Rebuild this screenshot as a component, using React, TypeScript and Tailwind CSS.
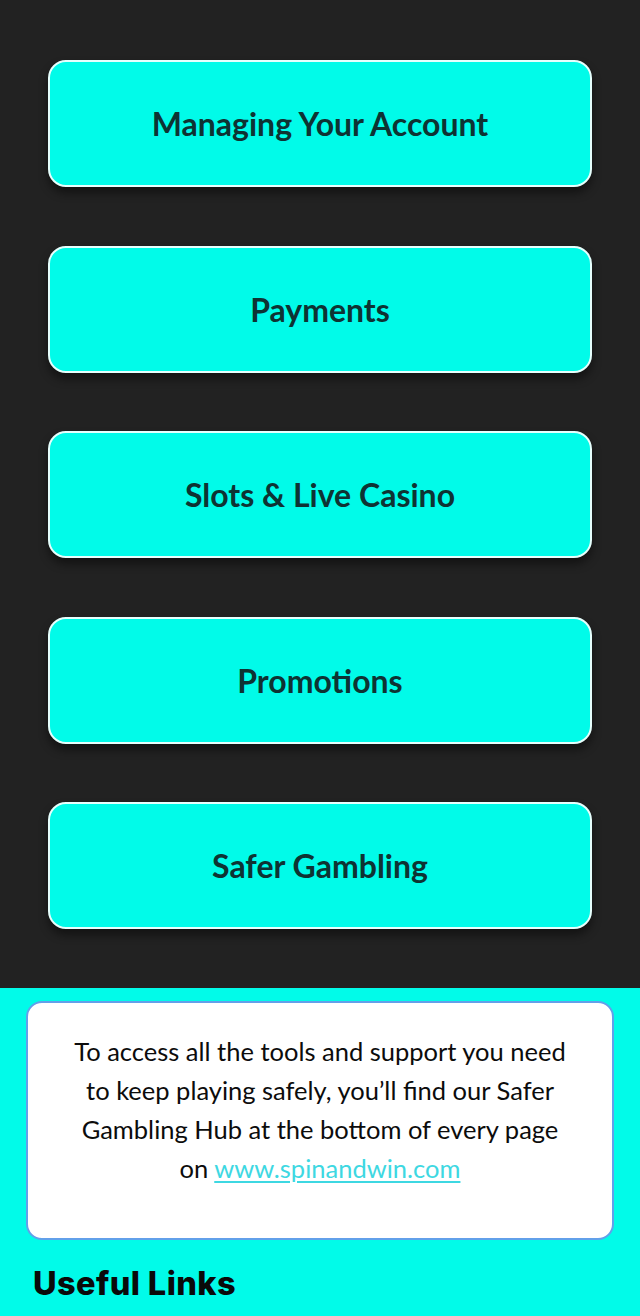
import React from 'react';

const topics = [
  'Managing Your Account',
  'Payments',
  'Slots & Live Casino',
  'Promotions',
  'Safer Gambling',
];

export default function App() {
  return (
    <div className="w-[640px] h-[1316px] overflow-hidden bg-[#01fbe9] font-['Lato','Open_Sans',sans-serif]">
      <div className="bg-[#222222] px-[48px] pt-[60px] pb-[59px] flex flex-col gap-[58.5px]">
        {topics.map((t) => (
          <a
            key={t}
            href="#"
            className="h-[127px] flex items-center justify-center pt-[1px] rounded-[18px] border-2 border-[#e6fffd] bg-[#01fbe9] text-[32px] font-bold text-[#0e3333] shadow-[0_6px_10px_rgba(0,0,0,0.45)]"
          >
            {t}
          </a>
        ))}
      </div>

      <div className="px-[26px] pt-[13px]">
        <div className="h-[239px] rounded-[16px] border-2 border-[#62a0ea] bg-white px-[40px] pt-[29px] text-center text-[25.5px] leading-[39px] text-[#0c0c0c]">
          To access all the tools and support you need to keep playing safely, you’ll find our Safer Gambling Hub at the bottom of every page on{' '}
          <a href="#" className="text-[#3ed8e2] underline underline-offset-[3px]">
            www.spinandwin.com
          </a>
        </div>
        <h2 className="mt-[28px] pl-[7px] text-[32.5px] font-extrabold leading-none tracking-[0.4px] text-[#0a0a0a] font-['Inter',sans-serif]">
          Useful Links
        </h2>
      </div>
    </div>
  );
}
